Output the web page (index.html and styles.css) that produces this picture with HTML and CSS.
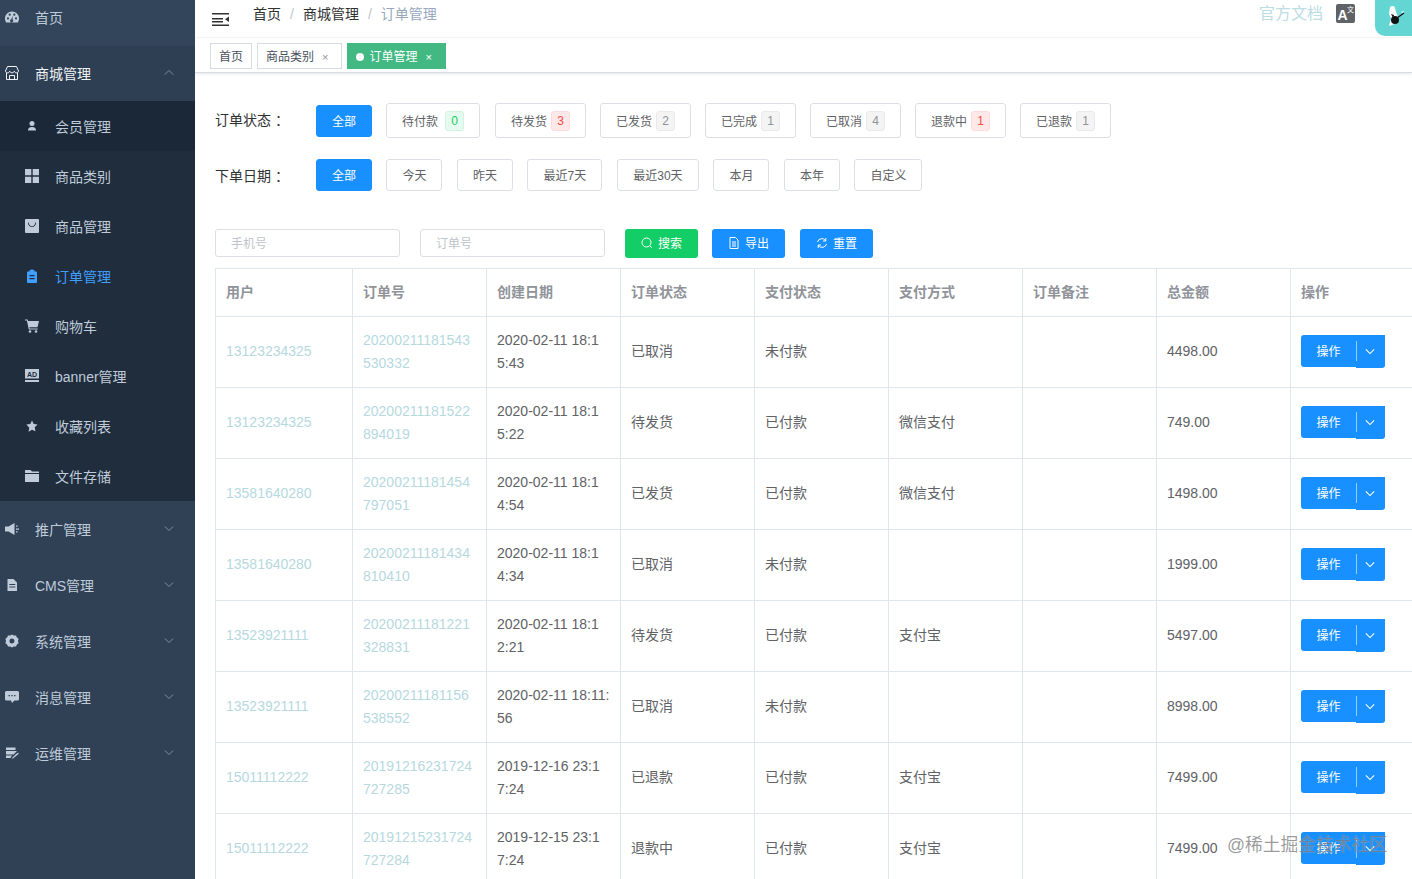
FILE: index.html
```html
<!DOCTYPE html>
<html lang="zh">
<head>
<meta charset="utf-8">
<title>订单管理</title>
<link rel="stylesheet" href="styles.css">
</head>
<body>
<svg class="defs" width="0" height="0" aria-hidden="true">
  <symbol id="chev-d" viewBox="0 0 12 8"><path d="M1 1.500 6 6.500 11 1.500" fill="none" stroke="currentColor"/></symbol>
  <symbol id="chev-u" viewBox="0 0 12 8"><path d="M1 6.500 6 1.500 11 6.500" fill="none" stroke="currentColor"/></symbol>
</svg>
<aside class="sidebar">
  <ul class="menu">
    <li class="item top-first">
      <svg class="ico" viewBox="0 0 14 14"><path fill="currentColor" fill-rule="evenodd" d="M7 1.500a7 7 0 0 1 7 7c0 1.600-.5 3-1.300 4H1.300C.5 11.500 0 10.100 0 8.500a7 7 0 0 1 7-7ZM3 7.300a1.100 1.100 0 1 0 0 2.200 1.100 1.100 0 0 0 0-2.200Zm8 0a1.100 1.100 0 1 0 0 2.200 1.100 1.100 0 0 0 0-2.200ZM4.700 3.600a1.100 1.100 0 1 0 0 2.200 1.100 1.100 0 0 0 0-2.200Zm4.600 0a1.100 1.100 0 1 0 0 2.200 1.100 1.100 0 0 0 0-2.200ZM7.600 6 6.300 9.300a1.500 1.500 0 1 0 1.300.3Z"/></svg>
      <span>首页</span>
    </li>
    <li class="item open">
      <svg class="ico" viewBox="0 0 14 14"><path fill="none" stroke="currentColor" stroke-width="1" d="M2.500 .5h9L13.500 5c0 1-1 1.800-2.100 1.800S9.300 6 9.300 5c0 1-1.100 1.800-2.300 1.800S4.700 6 4.700 5c0 1-1 1.800-2.100 1.800S.5 6 .5 5L2.500 .5ZM1.500 6.800v6.700h11V6.800M4.500 13.500V9.500h5v4"/></svg>
      <span>商城管理</span>
      <svg class="chev"><use href="#chev-u"/></svg>
    </li>
    <li>
      <ul class="sub">
        <li class="sub-item hover">
          <svg class="ico small" viewBox="0 0 14 14"><circle cx="7" cy="4.500" r="2.500" fill="currentColor"/><path fill="currentColor" d="M3 11.500c0-2.500 1.500-3.500 4-3.500s4 1 4 3.500Z"/></svg>
          <span>会员管理</span>
        </li>
        <li class="sub-item">
          <svg class="ico" viewBox="0 0 14 14"><path fill="currentColor" d="M0 0h6.300v6.300H0zM7.700 0H14v6.300H7.700zM0 7.700h6.300V14H0zM7.700 7.700H14V14H7.700z"/></svg>
          <span>商品类别</span>
        </li>
        <li class="sub-item">
          <svg class="ico" viewBox="0 0 14 14"><path fill="currentColor" fill-rule="evenodd" d="M1 0h12a1 1 0 0 1 1 1v12a1 1 0 0 1-1 1H1a1 1 0 0 1-1-1V1a1 1 0 0 1 1-1Zm2.800 3.500H3c0 2.800 1.600 4.500 4 4.500s4-1.700 4-4.500h-.8c0 2.300-1.300 3.700-3.200 3.700S3.800 5.800 3.800 3.500Z"/></svg>
          <span>商品管理</span>
        </li>
        <li class="sub-item active">
          <svg class="ico" viewBox="0 0 14 14"><path fill="currentColor" fill-rule="evenodd" d="M4.500 1h1.200a1.500 1.500 0 0 1 2.600 0h1.200v1.500h1.800a.8.8 0 0 1 .7.8V13a1 1 0 0 1-1 1H3a1 1 0 0 1-1-1V3.300a.8.8 0 0 1 .7-.8h1.800ZM4.500 6v1.200h5V6Zm0 3v1.200h5V9Z"/></svg>
          <span>订单管理</span>
        </li>
        <li class="sub-item">
          <svg class="ico" viewBox="0 0 14 14"><path fill="currentColor" d="M0 .5h2.600l.5 1.500H14l-1.500 6.200H4.400l.3 1.300h8v1H3.800L1.900 1.500H0Z"/><circle cx="5" cy="12.500" r="1.300" fill="currentColor"/><circle cx="11" cy="12.500" r="1.300" fill="currentColor"/></svg>
          <span>购物车</span>
        </li>
        <li class="sub-item">
          <svg class="ico" viewBox="0 0 14 14"><rect width="14" height="9.500" fill="currentColor"/><text class="ad" x="7" y="7.700" text-anchor="middle">AD</text><path fill="currentColor" d="M0 11h14v2H0z"/></svg>
          <span>banner管理</span>
        </li>
        <li class="sub-item">
          <svg class="ico small" viewBox="0 0 14 14"><path fill="currentColor" d="m7 1.500 1.700 3.600 3.900.5-2.900 2.700.8 3.900L7 10.800l-3.500 1.900.8-3.900L1.400 5.600l3.900-.5Z"/></svg>
          <span>收藏列表</span>
        </li>
        <li class="sub-item">
          <svg class="ico" viewBox="0 0 14 14"><path fill="currentColor" d="M0 1.500A.5.5 0 0 1 .5 1h5L7 2.500h6.500a.5.5 0 0 1 .5.5v1H0ZM0 5h14v7.500a.5.5 0 0 1-.5.5H.5a.5.5 0 0 1-.5-.5Z"/></svg>
          <span>文件存储</span>
        </li>
      </ul>
    </li>
    <li class="item">
      <svg class="ico" viewBox="0 0 14 14"><path fill="currentColor" d="M0 4.500h3.500L9.500 1v12L3.500 9.500H0Z"/><path fill="currentColor" d="M11 3.500h1.500v1.300H11zM11 6.400h3v1.300h-3zM11 9.300h1.500v1.300H11z"/></svg>
      <span>推广管理</span>
      <svg class="chev"><use href="#chev-d"/></svg>
    </li>
    <li class="item">
      <svg class="ico" viewBox="0 0 14 14"><path fill="currentColor" fill-rule="evenodd" d="M2.500 1h6L12 4.500V13H2.500ZM4.300 6v1h6V6Zm0 2.500v1h6v-1Z"/></svg>
      <span>CMS管理</span>
      <svg class="chev"><use href="#chev-d"/></svg>
    </li>
    <li class="item">
      <svg class="ico" viewBox="0 0 14 14"><path fill="currentColor" fill-rule="evenodd" d="m7 .5 1.800 1.100 2.200-.2.900 2 1.700 1.400L13 7l.6 2.200-1.700 1.400-.9 2-2.200-.2L7 13.500l-1.800-1.100-2.200.2-.9-2L.4 9.200 1 7 .4 4.800l1.700-1.400.9-2 2.200.2ZM7 4.500a2.500 2.500 0 1 0 0 5 2.500 2.500 0 0 0 0-5Z"/></svg>
      <span>系统管理</span>
      <svg class="chev"><use href="#chev-d"/></svg>
    </li>
    <li class="item">
      <svg class="ico" viewBox="0 0 14 14"><path fill="currentColor" fill-rule="evenodd" d="M1.500 1h11A1.500 1.500 0 0 1 14 2.500v6.500a1.500 1.500 0 0 1-1.500 1.500H9.500L7 13l-1-2.500H1.500A1.500 1.500 0 0 1 0 9V2.500A1.500 1.500 0 0 1 1.500 1ZM3.500 5v1.300h1.400V5Zm2.800 0v1.300h1.400V5Zm2.800 0v1.300h1.400V5Z"/></svg>
      <span>消息管理</span>
      <svg class="chev"><use href="#chev-d"/></svg>
    </li>
    <li class="item">
      <svg class="ico" viewBox="0 0 14 14"><path fill="currentColor" d="M1 1.500h9.500V4H1zM1 5h11L8.500 8.500H1zM1 9.500h6L5.500 12H1zM11 8l2.500-1.500v1.500L8 12.500H6.500Z"/></svg>
      <span>运维管理</span>
      <svg class="chev"><use href="#chev-d"/></svg>
    </li>
  </ul>
</aside>

<main class="main">
  <header class="navbar">
    <svg class="hamburger" viewBox="0 0 17 13"><path fill="#303133" d="M0 0h17v1.400H0zM0 5h11v1.400H0zM0 8h11v1.400H0zM0 11.600h17V13H0zM17 3.500v5.500L13 6.200Z"/></svg>
    <nav class="crumbs">
      <span>首页</span><i>/</i><span>商城管理</span><i>/</i><span class="last">订单管理</span>
    </nav>
    <div class="nav-right">
      <span class="docs">官方文档</span>
      <svg class="translate" viewBox="0 0 19 19"><rect width="19" height="19" rx="2" fill="#5f6368"/><text class="t-a" x="1.500" y="16">A</text><text class="t-z" x="11" y="8">文</text></svg>
      <div class="avatar">
        <svg viewBox="0 0 37 36" width="37" height="36"><path fill="#fff" d="M15 7c2-2 5-1 5 1l1 4 2 5-1 6-5 2-3 1 1-4 1-3-2-5Z"/><circle cx="20" cy="20" r="4" fill="#111"/><path fill="#111" d="M16 14l3 1-1 3Z"/><path stroke="#111" stroke-width="1.200" d="M22 18l7-5"/><path fill="#fff" d="M26 12l3-1-1 2Z"/></svg>
      </div>
    </div>
  </header>

  <div class="tabs">
    <span class="tab">首页</span>
    <span class="tab">商品类别<b>×</b></span>
    <span class="tab current"><em></em>订单管理<b>×</b></span>
  </div>

  <section class="content">
    <div class="filter status-row">
      <label>订单状态 ：</label>
      <button class="btn primary">全部</button>
      <button class="btn tall wide">待付款<span class="tag ok">0</span></button>
      <button class="btn tall">待发货<span class="tag bad">3</span></button>
      <button class="btn tall">已发货<span class="tag">2</span></button>
      <button class="btn tall">已完成<span class="tag">1</span></button>
      <button class="btn tall">已取消<span class="tag">4</span></button>
      <button class="btn tall">退款中<span class="tag bad">1</span></button>
      <button class="btn tall">已退款<span class="tag">1</span></button>
    </div>
    <div class="filter date-row">
      <label>下单日期 ：</label>
      <button class="btn primary">全部</button>
      <button class="btn">今天</button>
      <button class="btn">昨天</button>
      <button class="btn d7">最近7天</button>
      <button class="btn d30">最近30天</button>
      <button class="btn">本月</button>
      <button class="btn">本年</button>
      <button class="btn">自定义</button>
    </div>
    <div class="search">
      <input class="field" placeholder="手机号">
      <input class="field" placeholder="订单号">
      <button class="act green"><svg viewBox="0 0 12 12"><circle cx="5.500" cy="5.500" r="4.500" fill="none" stroke="currentColor"/><path d="m8.800 8.800 2 2" stroke="currentColor"/></svg>搜索</button>
      <button class="act export"><svg viewBox="0 0 12 12"><path d="M2 .5h5.500L10 3v8.500H2ZM4 5h4M4 7h4M4 9h4" fill="none" stroke="currentColor"/></svg>导出</button>
      <button class="act"><svg viewBox="0 0 12 12"><path d="M1.500 5a4.500 4.500 0 0 1 8-1.500M10.500 7a4.500 4.500 0 0 1-8 1.500" fill="none" stroke="currentColor"/><path d="M9.800 1v3H7M2.200 11V8H5" fill="none" stroke="currentColor"/></svg>重置</button>
    </div>

    <table class="orders">
      <colgroup><col class="c1"><col><col><col><col><col><col><col><col></colgroup>
      <thead>
        <tr><th>用户</th><th>订单号</th><th>创建日期</th><th>订单状态</th><th>支付状态</th><th>支付方式</th><th>订单备注</th><th>总金额</th><th>操作</th></tr>
      </thead>
      <tbody>
        <tr><td class="link">13123234325</td><td class="link">20200211181543530332</td><td>2020-02-11 18:15:43</td><td>已取消</td><td>未付款</td><td></td><td></td><td>4498.00</td><td><div class="split"><span>操作</span><span class="caret"><svg><use href="#chev-d"/></svg></span></div></td></tr>
        <tr><td class="link">13123234325</td><td class="link">20200211181522894019</td><td>2020-02-11 18:15:22</td><td>待发货</td><td>已付款</td><td>微信支付</td><td></td><td>749.00</td><td><div class="split"><span>操作</span><span class="caret"><svg><use href="#chev-d"/></svg></span></div></td></tr>
        <tr><td class="link">13581640280</td><td class="link">20200211181454797051</td><td>2020-02-11 18:14:54</td><td>已发货</td><td>已付款</td><td>微信支付</td><td></td><td>1498.00</td><td><div class="split"><span>操作</span><span class="caret"><svg><use href="#chev-d"/></svg></span></div></td></tr>
        <tr><td class="link">13581640280</td><td class="link">20200211181434810410</td><td>2020-02-11 18:14:34</td><td>已取消</td><td>未付款</td><td></td><td></td><td>1999.00</td><td><div class="split"><span>操作</span><span class="caret"><svg><use href="#chev-d"/></svg></span></div></td></tr>
        <tr><td class="link">13523921111</td><td class="link">20200211181221328831</td><td>2020-02-11 18:12:21</td><td>待发货</td><td>已付款</td><td>支付宝</td><td></td><td>5497.00</td><td><div class="split"><span>操作</span><span class="caret"><svg><use href="#chev-d"/></svg></span></div></td></tr>
        <tr><td class="link">13523921111</td><td class="link">20200211181156538552</td><td>2020-02-11 18:11:56</td><td>已取消</td><td>未付款</td><td></td><td></td><td>8998.00</td><td><div class="split"><span>操作</span><span class="caret"><svg><use href="#chev-d"/></svg></span></div></td></tr>
        <tr><td class="link">15011112222</td><td class="link">20191216231724727285</td><td>2019-12-16 23:17:24</td><td>已退款</td><td>已付款</td><td>支付宝</td><td></td><td>7499.00</td><td><div class="split"><span>操作</span><span class="caret"><svg><use href="#chev-d"/></svg></span></div></td></tr>
        <tr><td class="link">15011112222</td><td class="link">20191215231724727284</td><td>2019-12-15 23:17:24</td><td>退款中</td><td>已付款</td><td>支付宝</td><td></td><td>7499.00</td><td><div class="split"><span>操作</span><span class="caret"><svg><use href="#chev-d"/></svg></span></div></td></tr>
      </tbody>
    </table>
  </section>
</main>
<div class="watermark">@稀土掘金技术社区</div>
</body>
</html>
```
FILE: styles.css
```css
* { box-sizing: border-box; }
html, body { height: 100%; }
body {
  margin: 0;
  display: flex;
  height: 100vh;
  overflow: hidden;
  font-family: "Liberation Sans", "Noto Sans CJK SC", sans-serif;
  font-size: 14px;
  color: #606266;
  background: #fff;
}
.defs { position: absolute; }
ul { list-style: none; margin: 0; padding: 0; }

/* sidebar */
.sidebar { flex: 0 0 195px; background: #304156; overflow: hidden; color: #bfcbd9; }
.menu { margin-top: -10px; }
.item {
  height: 56px;
  display: flex;
  align-items: center;
  padding-left: 5px;
  position: relative;
}
.item.top-first { background: #33455b; }
.item.open { background: #2e3f54; color: #f0f3f6; }
.item > span { margin-left: 16px; line-height: 56px; }
.ico { width: 14px; height: 14px; flex: none; margin-top: -2px; }
.ico.small { color: #bfcbd9; }
.chev {
  position: absolute;
  right: 21px;
  top: 23px;
  width: 10px;
  height: 7px;
  color: #7c8da2;
  stroke-width: 1.2;
}
.sub { background: #1f2d3d; margin: -1px 0 1px; position: relative; }
.sub-item {
  height: 50px;
  display: flex;
  align-items: center;
  padding: 2px 0 0 25px;
}
.sub-item > span { margin-left: 16px; line-height: 48px; }
.sub-item.hover { background: #1a2838; }
.sub-item.active { color: #409eff; }
.ad { font: bold 7px "Liberation Sans", sans-serif; fill: #1f2d3d; }

/* main */
.main { flex: 1; min-width: 0; overflow: hidden; display: flex; flex-direction: column; }
.navbar {
  height: 38px;
  flex: none;
  display: flex;
  align-items: flex-start;
  border-bottom: 1px solid #f7f8f9;
  padding-left: 17px;
}
.hamburger { width: 17px; height: 13px; margin-top: 13px; flex: none; }
.crumbs { margin-left: 24px; line-height: 28px; color: #303133; white-space: nowrap; }
.crumbs i { font-style: normal; color: #c0c4cc; margin: 0 9px; }
.crumbs .last { color: #97a8be; }
.nav-right { margin-left: auto; display: flex; align-items: flex-start; }
.docs { font-size: 16px; line-height: 27px; color: #bcdde4; }
.translate { width: 19px; height: 19px; margin: 4px 0 0 13px; }
.t-a { font: bold 14px "Liberation Sans", sans-serif; fill: #fff; }
.t-z { font: 7px "Noto Sans CJK SC", sans-serif; fill: #fff; }
.avatar {
  width: 37px;
  height: 36px;
  margin-left: 20px;
  background: #63d6d3;
  border-bottom-left-radius: 10px;
}
.avatar svg { display: block; }

.tabs {
  height: 35px;
  flex: none;
  display: flex;
  gap: 5px;
  padding: 5px 0 0 15px;
  border-bottom: 1px solid #d8dce5;
  box-shadow: 0 1px 3px rgba(0,0,0,.1);
}
.tab {
  height: 26px;
  line-height: 26px;
  border: 1px solid #d8dce5;
  padding: 0 8px;
  font-size: 12px;
  color: #495060;
  background: #fff;
}
.tab b { font-weight: 400; margin: 0 5px 0 8px; color: #909399; font-size: 11px; }
.tab.current { background: #42b983; border-color: #42b983; color: #fff; }
.tab.current b { color: #fff; }
.tab em {
  display: inline-block;
  width: 8px;
  height: 8px;
  border-radius: 50%;
  background: #fff;
  margin-right: 5px;
}

/* filters */
.content { padding: 30px 0 0 20px; flex: 1; }
.filter { display: flex; align-items: center; }
.filter label { flex: 0 0 101px; color: #303133; line-height: 20px; white-space: pre; }
.status-row { height: 35px; gap: 14px; }
.status-row label { margin: -2px -14px 0 0; }
.date-row { height: 32px; margin-top: 21px; gap: 14.5px; }
.date-row label { margin: 2px -14.5px 0 0; }
.date-row .primary { width: 55.9px; }
.date-row .btn { padding-bottom: 2px; }
.btn {
  height: 32px;
  padding: 0 15px;
  border: 1px solid #dcdfe6;
  border-radius: 3px;
  background: #fff;
  color: #606266;
  font: 12px "Liberation Sans", "Noto Sans CJK SC", sans-serif;
  display: inline-flex;
  align-items: center;
  justify-content: center;
  white-space: nowrap;
  flex: none;
}
.btn.primary { background: #1890ff; border-color: #1890ff; color: #fff; }
.btn.tall { height: 35px; width: 91px; justify-content: space-between; }
.btn.wide { width: 94px; margin-right: 1px; }
.btn.d7 { width: 75px; }
.btn.d30 { width: 82px; }
.tag {
  width: 19px;
  height: 20px;
  line-height: 18px;
  text-align: center;
  border: 1px solid #eaeaec;
  border-radius: 3px;
  background: #f4f4f5;
  color: #909399;
  font-size: 12px;
}
.tag.ok { background: #e7faf0; border-color: #d0f5e0; color: #13ce66; }
.tag.bad { background: #ffe8e8; border-color: #ffdbdb; color: #ff4949; }

.search { display: flex; align-items: flex-start; margin-top: 38px; height: 29px; }
.field {
  width: 185px;
  height: 28px;
  margin-right: 20px;
  border: 1px solid #dcdfe6;
  border-radius: 3px;
  padding: 2px 15px 0;
  font: 12px "Liberation Sans", "Noto Sans CJK SC", sans-serif;
  color: #606266;
  outline: none;
}
.field::placeholder { color: #c0c4cc; opacity: 1; }
.act {
  width: 73px;
  height: 29px;
  margin-right: 15px;
  padding: 0 0 2px;
  border: 0;
  border-radius: 3px;
  background: #1890ff;
  color: #fff;
  font: 12px "Liberation Sans", "Noto Sans CJK SC", sans-serif;
  display: inline-flex;
  align-items: center;
  justify-content: center;
  gap: 5px;
  flex: none;
}
.act svg { width: 12px; height: 12px; }
.act.green { background: #13ce66; margin-right: 14px; }

/* table */
.orders {
  margin-top: 10px;
  width: 1209px;
  table-layout: fixed;
  border-collapse: collapse;
}
.orders col { width: 134px; }
.orders col.c1 { width: 137px; }
.orders th, .orders td {
  border: 1px solid #dfe6ec;
  padding: 0 10px;
  text-align: left;
  line-height: 23px;
  word-break: break-all;
}
.orders th { height: 48px; color: #909399; font-weight: 700; }
.orders td { height: 71px; padding-bottom: 2px; }
.orders td:nth-child(2), .orders td:nth-child(3) { padding-bottom: 0; }
.orders .link { color: #b6d9e0; }
.split {
  width: 84px;
  height: 32px;
  background: #1890ff;
  border-radius: 3px;
  color: #fff;
  font-size: 12px;
  display: flex;
  align-items: center;
  position: relative;
}
.split > span:first-child { width: 55px; text-align: center; line-height: 32px; padding-top: 2px; }
.caret {
  flex: 1;
  height: 33px;
  margin-top: 1px;
  background: #1890ff;
  border-radius: 0 0 3px 0;
  display: flex;
  align-items: center;
  justify-content: center;
  position: relative;
}
.caret::before {
  content: "";
  position: absolute;
  left: 0;
  top: 6px;
  bottom: 7px;
  width: 1px;
  background: rgba(255,255,255,.55);
}
.caret svg { width: 10px; height: 7px; color: #fff; stroke-width: 1.300; margin-right: 1px; }

.watermark {
  position: absolute;
  left: 1227px;
  top: 832px;
  font-size: 17.8px;
  line-height: 26px;
  white-space: nowrap;
  color: rgba(70,70,70,.55);
  text-shadow: 0 0 1px rgba(255,255,255,.6);
}
```
